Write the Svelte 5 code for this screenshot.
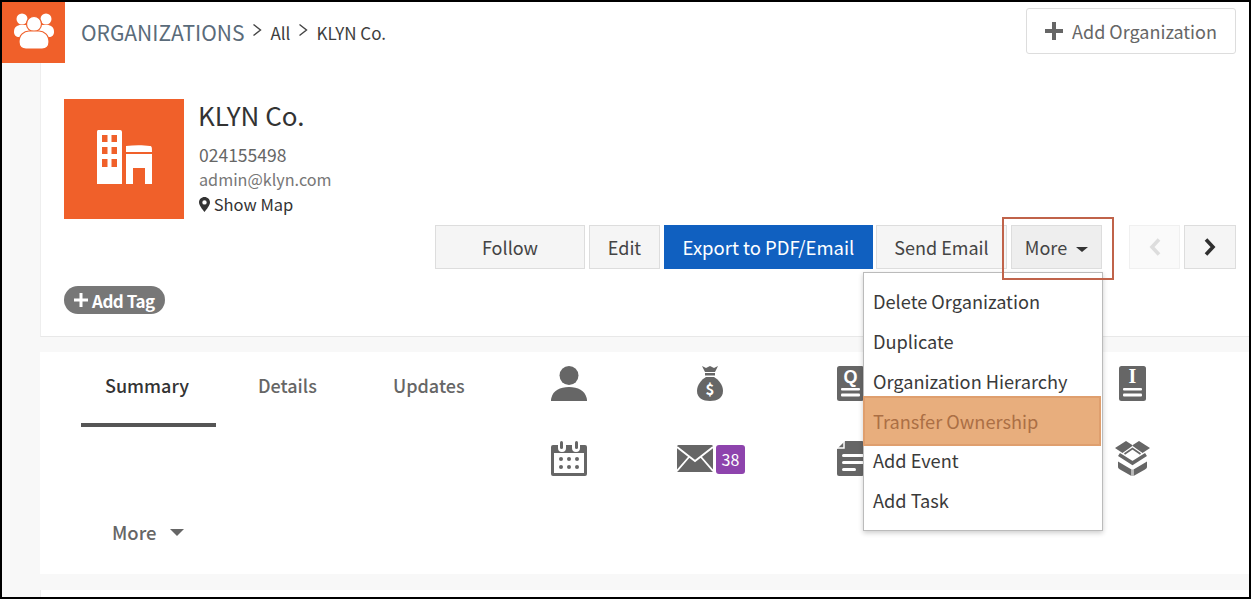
<script>
  const menu = [
    { label: 'Delete Organization' },
    { label: 'Duplicate' },
    { label: 'Organization Hierarchy' },
    { label: 'Transfer Ownership', marked: true },
    { label: 'Add Event' },
    { label: 'Add Task' }
  ];
</script>

<div class="page">
  <header class="topbar">
    <div class="logo">
      <svg width="40" height="37" viewBox="0 0 40 37">
        <circle cx="8" cy="7" r="5.5" fill="#fff" />
        <circle cx="32" cy="7" r="5.5" fill="#fff" />
        <path d="M0 20c0-5 3-7 7-7h26c4 0 7 2 7 7 0 3-2 5-5 5H5c-3 0-5-2-5-5z" fill="#fff" />
        <circle cx="20" cy="12" r="7.5" fill="#fff" stroke="#f0602a" stroke-width="1.2" />
        <path d="M5 30c0-7 5-11 10-11h10c5 0 10 4 10 11 0 5-3 7-7 7H12c-4 0-7-2-7-7z" fill="#fff" stroke="#f0602a" stroke-width="1.2" />
      </svg>
    </div>
    <nav class="crumbs">
      <span class="root">ORGANIZATIONS</span>
      <svg class="chev" width="10" height="14" viewBox="0 0 10 14"><path d="M1.500 1.500l7 5.500-7 5.500" fill="none" stroke="#444" stroke-width="1.4" /></svg>
      <span>All</span>
      <svg class="chev" width="10" height="14" viewBox="0 0 10 14"><path d="M1.500 1.500l7 5.500-7 5.500" fill="none" stroke="#444" stroke-width="1.4" /></svg>
      <span>KLYN Co.</span>
    </nav>
    <button class="add-org">
      <svg width="18" height="18" viewBox="0 0 18 18"><path d="M7 0h4v7h7v4h-7v7H7v-7H0V7h7z" fill="#666" /></svg>
      Add Organization
    </button>
  </header>

  <div class="content">
    <section class="card record">
      <div class="identity">
        <div class="avatar">
          <svg width="56" height="56" viewBox="0 0 56 56">
            <path fill="#fff" fill-rule="evenodd" d="M2 1h22a2 2 0 0 1 2 2v52H1V3a2 2 0 0 1 1-2zM6 6v7h5.500V6zm9.500 0v7H21V6zM6 18v7h5.500v-7zm9.500 0v7H21v-7zM6 30v8h5.500v-8zm9.500 0v8H21v-8z" />
            <path fill="#fff" d="M30 17c8-1 17-1 24 0 2 0 2 2 2 6H30z" />
            <path fill="#fff" fill-rule="evenodd" d="M30 25h26v30h-7V39H37v16h-7z" />
          </svg>
        </div>
        <div class="info">
          <h1>KLYN Co.</h1>
          <div class="phone">024155498</div>
          <div class="email">admin@klyn.com</div>
          <div class="map">
            <svg width="11" height="15" viewBox="0 0 11 15"><path fill-rule="evenodd" fill="#333" d="M5.500 0C2.500 0 0 2.300 0 5.300 0 8.500 3.500 12.500 5.500 15c2-2.500 5.500-6.500 5.500-9.700C11 2.300 8.500 0 5.500 0zm0 3.200a2.200 2.200 0 1 1 0 4.400 2.200 2.200 0 0 1 0-4.400z" /></svg>
            Show Map
          </div>
        </div>
      </div>

      <div class="actions">
        <button class="btn follow">Follow</button>
        <button class="btn edit">Edit</button>
        <button class="btn export">Export to PDF/Email</button>
        <button class="btn send">Send Email</button>
        <div class="more-wrap">
          <button class="btn more">More <span class="caret"></span></button>
          <span class="callout"></span>
          <ul class="menu">
            {#each menu as item}
              <li class:marked={item.marked}>{item.label}</li>
            {/each}
          </ul>
        </div>
        <button class="btn pager off">
          <svg width="14" height="18" viewBox="0 0 14 18"><path d="M11 1.500L4 9l7 7.500" fill="none" stroke="#ddd" stroke-width="3.600" /></svg>
        </button>
        <button class="btn pager">
          <svg width="14" height="18" viewBox="0 0 14 18"><path d="M3 1.500L10 9l-7 7.500" fill="none" stroke="#2f2f2f" stroke-width="3.600" /></svg>
        </button>
      </div>

      <span class="tag">
        <svg width="14" height="14" viewBox="0 0 14 14"><path d="M5.500 0h3v5.500H14v3H8.500V14h-3V8.500H0v-3h5.500z" fill="#fff" /></svg>
        Add Tag
      </span>
    </section>

    <section class="card tabs">
      <div class="tablist">
        <div class="tabrow">
          <div class="tab active">Summary</div>
          <div class="tab details">Details</div>
          <div class="tab updates">Updates</div>
        </div>
        <div class="tabmore">More <span class="caret wide"></span></div>
      </div>
      <div class="icons">
        <div class="cell">
          <svg width="36" height="35" viewBox="0 0 36 35">
            <circle cx="18" cy="9.500" r="9.500" fill="#666" />
            <path d="M0 35c0-1 0-2 .5-3.500C2 25 9 21 18 21s16 4 17.500 10.500c.5 1.500.5 2.500.5 3.500z" fill="#666" />
          </svg>
        </div>
        <div class="cell">
          <svg width="26" height="35" viewBox="0 0 26 35">
            <path d="M5 0l4 2 4-2 4 2 4-2-3 6H8z" fill="#666" />
            <rect x="8" y="7" width="10" height="2.500" fill="#666" />
            <path d="M9 11h8c5 3 9 8 9 14 0 7-6 10-13 10S0 32 0 25c0-6 4-11 9-14z" fill="#666" />
            <text x="13" y="29" class="dollar">$</text>
          </svg>
        </div>
        <div class="cell">
          <svg width="27" height="35" viewBox="0 0 27 35">
            <rect width="27" height="35" rx="2.500" fill="#666" />
            <text x="13.500" y="17" class="stamp">Q</text>
            <rect x="4" y="22" width="19" height="2.500" rx="1" fill="#fff" />
            <rect x="4" y="27.500" width="19" height="3" rx="1" fill="#fff" />
          </svg>
        </div>
        <div class="cell"></div>
        <div class="cell">
          <svg width="27" height="35" viewBox="0 0 27 35">
            <rect width="27" height="35" rx="2.500" fill="#666" />
            <text x="13.500" y="17" class="stamp serif">I</text>
            <rect x="4" y="22" width="19" height="2.500" rx="1" fill="#fff" />
            <rect x="4" y="27.500" width="19" height="3" rx="1" fill="#fff" />
          </svg>
        </div>

        <div class="cell">
          <svg width="36" height="35" viewBox="0 0 36 35">
            <path fill="#666" d="M2 4h5v3a4 4 0 0 0 8 0V4h6v3a4 4 0 0 0 8 0V4h5a2 2 0 0 1 2 2v27a2 2 0 0 1-2 2H2a2 2 0 0 1-2-2V6a2 2 0 0 1 2-2z" />
            <rect x="9" y="0" width="3" height="8" rx="1.500" fill="#666" />
            <rect x="24" y="0" width="3" height="8" rx="1.500" fill="#666" />
            <rect x="3" y="12" width="30" height="20" fill="#fff" />
            <g fill="#666">
              <circle cx="10" cy="18" r="2" /><circle cx="18" cy="18" r="2" /><circle cx="26" cy="18" r="2" />
              <circle cx="10" cy="26" r="2" /><circle cx="18" cy="26" r="2" /><circle cx="26" cy="26" r="2" />
            </g>
          </svg>
        </div>
        <div class="cell mail">
          <svg width="36" height="27" viewBox="0 0 36 27">
            <rect width="36" height="27" rx="1.500" fill="#666" />
            <path d="M0 2l18 14L36 2M0 26l12-14M36 26L24 12" fill="none" stroke="#fff" stroke-width="1.800" />
          </svg>
          <span class="badge">38</span>
        </div>
        <div class="cell">
          <svg width="27" height="35" viewBox="0 0 27 35">
            <path d="M8 0h17a2 2 0 0 1 2 2v31a2 2 0 0 1-2 2H2a2 2 0 0 1-2-2V8z" fill="#666" />
            <path d="M7 0v7H0" fill="none" stroke="#fff" stroke-width="1.500" />
            <rect x="5" y="13" width="22" height="3" rx="1.500" fill="#fff" />
            <rect x="5" y="20" width="22" height="3" rx="1.500" fill="#fff" />
            <rect x="5" y="27" width="14" height="3" rx="1.500" fill="#fff" />
          </svg>
        </div>
        <div class="cell"></div>
        <div class="cell">
          <svg width="35" height="35" viewBox="0 0 35 35">
            <path fill="#666" d="M0 7l11-7 7 4.500-10.500 7.500zM35 7L24 0l-7 4.500L27.500 12z" />
            <path fill="none" stroke="#666" stroke-width="1.800" d="M9.500 13l8-5.500 8 5.500" />
            <path fill="none" stroke="#666" stroke-width="3.600" d="M4 13.500l13.500 8.500L31 13.500" />
            <path fill="#666" d="M3 20.500l13.500 8V35L5 28.500c-1.500-1-2-1.500-2-3zM32 20.500v5c0 1.500-.5 2-2 3L18.500 35v-6.500z" />
            <path fill="#bbb" d="M16.500 28.500h2V35h-2z" />
          </svg>
        </div>
      </div>
    </section>

    <section class="card rest"></section>
  </div>
</div>

<style>
  :global(body) {
    margin: 0;
    font-family: "Noto Sans CJK KR", "Noto Sans", sans-serif;
    color: #333;
  }

  * {
    box-sizing: border-box;
  }

  .page {
    height: 599px;
    border: 2px solid #000;
    background: #f8f8f8;
    overflow: hidden;
  }

  .topbar {
    display: flex;
    align-items: flex-start;
    height: 61px;
    background: #fff;
  }

  .logo {
    width: 63px;
    height: 61px;
    background: #f0602a;
    display: flex;
    justify-content: center;
    padding-top: 10px;
  }

  .crumbs {
    display: flex;
    align-items: center;
    height: 60px;
    margin-left: 16px;
    font-size: 17px;
    color: #3d3d3d;
  }

  .root {
    font-size: 21px;
    color: #5a6b7a;
  }

  .chev {
    margin: -4px 8px 0;
  }

  .add-org {
    margin: 6px 13px 0 auto;
    width: 210px;
    height: 46px;
    display: flex;
    align-items: center;
    justify-content: center;
    gap: 9px;
    background: #fff;
    border: 1px solid #ddd;
    border-radius: 3px;
    color: #666;
    font: inherit;
    font-size: 18px;
  }

  .content {
    margin-left: 38px;
    display: flex;
    flex-direction: column;
    gap: 15px;
  }

  .card {
    background: #fff;
  }

  .record {
    height: 274px;
    padding: 36px 13px 0 23px;
    border-left: 1px solid #eee;
    border-bottom: 1px solid #e8e8e8;
  }

  .identity {
    display: flex;
    gap: 15px;
  }

  .avatar {
    width: 120px;
    height: 120px;
    background: #f0602a;
    display: flex;
    align-items: center;
    justify-content: center;
    padding-bottom: 4px;
  }

  .info h1 {
    margin: -1px 0 0 -1px;
    font-size: 26px;
    font-weight: 400;
    line-height: 34px;
    color: #333;
  }

  .phone,
  .email,
  .map {
    font-size: 16.500px;
    line-height: 25px;
  }

  .phone {
    margin-top: 10px;
    font-size: 17.500px;
    color: #666;
  }

  .email {
    color: #777;
    font-size: 16.200px;
  }

  .map svg {
    vertical-align: -1px;
  }

  .actions {
    display: flex;
    justify-content: flex-end;
    margin-top: 6px;
    height: 44px;
  }

  .btn {
    height: 44px;
    padding: 0;
    background: #f5f5f5;
    border: 1px solid #ddd;
    color: #444;
    font: inherit;
    font-size: 18px;
  }

  .follow {
    width: 150px;
  }

  .edit {
    width: 71px;
    margin-left: 4px;
  }

  .export {
    width: 209px;
    margin-left: 4px;
    background: #1060c0;
    border-color: #1060c0;
    color: #fff;
    font-size: 18.500px;
  }

  .send {
    width: 131px;
    margin-left: 3px;
  }

  .more-wrap {
    position: relative;
    margin-left: 4px;
    width: 91px;
  }

  .more {
    width: 91px;
    background: #eee;
  }

  .caret {
    display: inline-block;
    margin-left: 5px;
    vertical-align: 3px;
    border-left: 6px solid transparent;
    border-right: 6px solid transparent;
    border-top: 5px solid #333;
  }

  .callout {
    position: absolute;
    z-index: 3;
    left: -9px;
    top: -8px;
    width: 112px;
    height: 63px;
    border: 2px solid #c0634a;
    pointer-events: none;
  }

  .menu {
    position: absolute;
    z-index: 2;
    top: 47px;
    left: -148px;
    width: 240px;
    height: 259px;
    margin: 0;
    padding: 9px 0 0;
    list-style: none;
    background: #fff;
    border: 1px solid #bbb;
    box-shadow: 0 2px 5px rgba(0, 0, 0, 0.2);
  }

  .menu li {
    height: 39.800px;
    line-height: 39.800px;
    padding-left: 9px;
    font-size: 18.200px;
    color: #3a3a3a;
    white-space: nowrap;
  }

  .menu li.marked {
    height: 50px;
    margin: -5px 1px -5px -1px;
    padding-left: 8px;
    background: #e8ae7d;
    border: 2px solid #df9f6e;
    line-height: 46px;
    color: #ab6f45;
    position: relative;
  }

  .pager {
    width: 52px;
    margin-left: 4px;
    display: flex;
    align-items: center;
    justify-content: center;
  }

  .pager.off {
    width: 51px;
    margin-left: 27px;
    background: #fafafa;
    border-color: #f0f0f0;
  }

  .tag {
    display: inline-flex;
    align-items: center;
    gap: 4px;
    margin-top: 17px;
    height: 28px;
    width: 101px;
    padding-left: 10px;
    border-radius: 14px;
    background: #777;
    color: #fff;
    font-size: 17px;
    font-weight: 700;
    letter-spacing: -0.5px;
  }

  .tabs {
    height: 222px;
    display: flex;
    padding-left: 41px;
  }

  .tablist {
    width: 418px;
  }

  .tabrow {
    display: flex;
  }

  .tab {
    height: 75px;
    padding-top: 19px;
    line-height: 28px;
    font-size: 18px;
    font-weight: 500;
    color: #666;
  }

  .tab.active {
    width: 135px;
    text-align: center;
    color: #333;
    border-bottom: 4px solid #555;
    padding-right: 3px;
  }

  .details {
    margin-left: 42px;
    width: 135px;
  }

  .updates {
    width: 80px;
  }

  .tabmore {
    margin: 91px 0 0 31px;
    font-size: 18.500px;
    font-weight: 500;
    color: #666;
    line-height: 28px;
  }

  .caret.wide {
    margin-left: 9px;
    vertical-align: 4px;
    border-left-width: 7px;
    border-right-width: 7px;
    border-top: 7px solid #666;
  }

  .icons {
    display: grid;
    grid-template-columns: repeat(5, 141px);
    grid-auto-rows: 75px;
    margin-left: -1px;
  }

  .cell {
    display: flex;
    align-items: flex-start;
    justify-content: center;
    padding-top: 14px;
  }

  .mail {
    gap: 3px;
    padding-top: 18px;
    padding-left: 3px;
  }

  .badge {
    width: 29px;
    height: 29px;
    border-radius: 3px;
    background: #8e44ad;
    color: #fff;
    font-size: 16px;
    line-height: 29px;
    text-align: center;
  }

  .dollar {
    fill: #fff;
    font-size: 15px;
    font-weight: 700;
    text-anchor: middle;
  }

  .stamp {
    fill: #fff;
    font-family: "Liberation Sans", sans-serif;
    font-size: 18px;
    font-weight: 700;
    text-anchor: middle;
  }

  .stamp.serif {
    font-family: "Liberation Serif", serif;
    font-size: 20px;
  }

  .rest {
    height: 40px;
    margin-top: 1px;
    border-left: 1px solid #eee;
  }
</style>
